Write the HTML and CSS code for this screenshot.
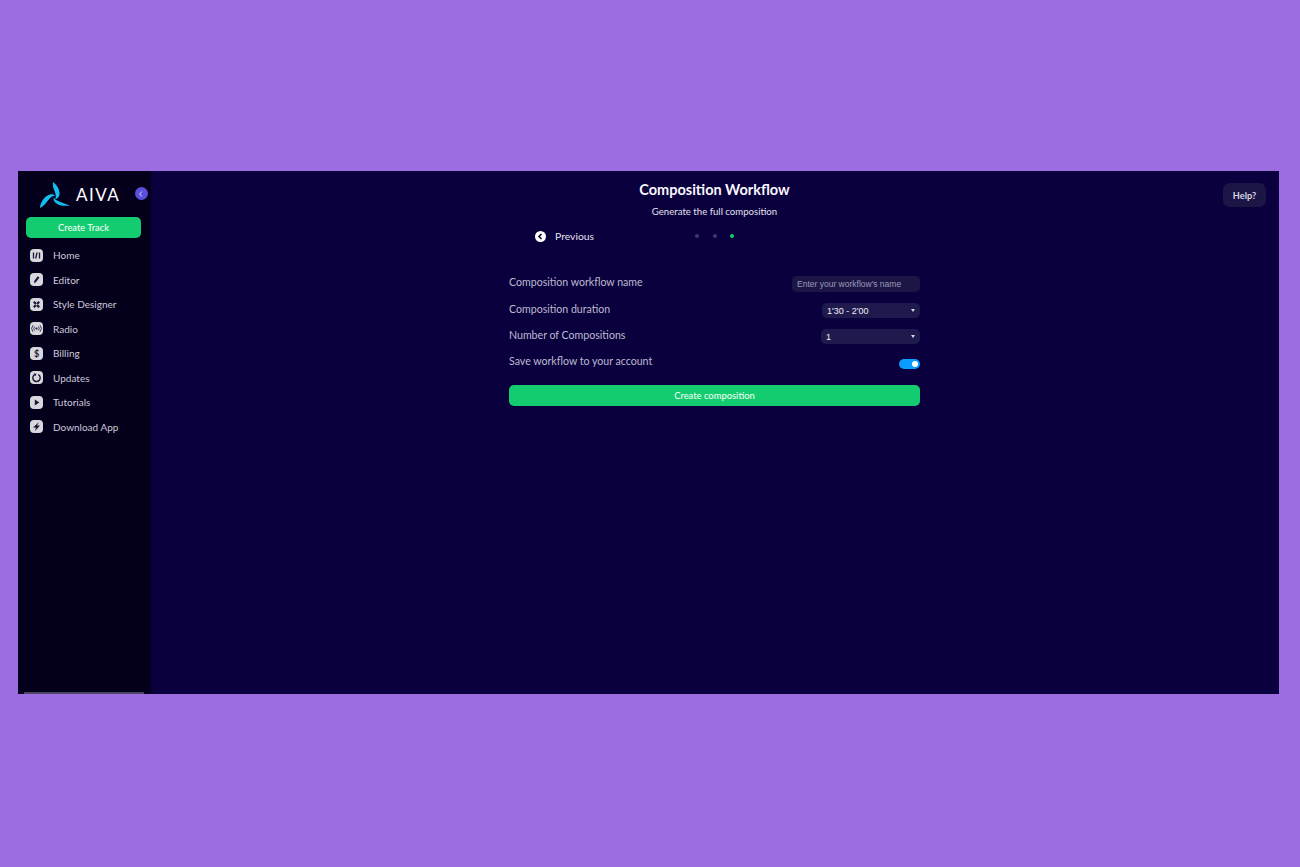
FILE: index.html
```html
<!DOCTYPE html>
<html lang="en">
<head>
<meta charset="utf-8">
<title>AIVA - Composition Workflow</title>
<link rel="stylesheet" href="styles.css">
</head>
<body>
<div class="app">
  <aside class="sidebar">
    <div class="brand">
      <svg class="logo" viewBox="0 0 30 26" width="30" height="26" aria-hidden="true">
        <path fill="#14bdf0" d="M13 0c4.500 3.500 7 8 6.500 12.500-.3 2.500-1.800 4-4 4.700 1-3.700-.4-6.700-1.500-9.700C13 5 12.700 2.500 13 0z"/>
        <path fill="#14bdf0" d="M0 26c.5-6 3.500-10.500 8.500-13 2.200-1.200 5-.8 6.500.5-3.500.5-5.500 3-7.500 5.500C5.500 22 3 24.500 0 26z"/>
        <path fill="#14bdf0" d="M30 23.500c-5 .8-11 .2-14.500-2.800-1.800-1.500-2.200-3.500-1.700-5.200 2 3 5 4 8.500 5.200 2.500 1 5.200 1.900 7.700 2.800z"/>
      </svg>
      <span class="wordmark">AIVA</span>
      <button class="collapse" type="button" aria-label="Collapse">
        <svg viewBox="0 0 8 8" width="8" height="8"><path d="M5 1.500 2.500 4 5 6.500" fill="none" stroke="#d9d6ff" stroke-width="1"/></svg>
      </button>
    </div>
    <button class="create-track" type="button">Create Track</button>
    <nav class="nav">
      <a class="nav-item"><span class="nav-icon"><svg viewBox="0 0 13 13"><path d="M3.500 3.500v6M5.700 9.500l1.400-6M9.500 3.500v6" stroke="#1a1530" stroke-width="1.300" fill="none"/></svg></span>Home</a>
      <a class="nav-item"><span class="nav-icon"><svg viewBox="0 0 13 13"><path d="M4 10.200l.4-2.400 3.300-4.600 1.700 1.200-3.300 4.600z" fill="#1a1530"/></svg></span>Editor</a>
      <a class="nav-item"><span class="nav-icon"><svg viewBox="0 0 13 13"><path d="M3.800 3.800l5.400 5.400M9.200 3.800l-5.400 5.400" stroke="#1a1530" stroke-width="2.200" fill="none"/><circle cx="6.500" cy="6.500" r="1" fill="#d8d6de"/></svg></span>Style Designer</a>
      <a class="nav-item"><span class="nav-icon"><svg viewBox="0 0 13 13"><circle cx="6.500" cy="6.500" r="1.100" fill="#1a1530"/><path d="M4.600 4.500a3 3 0 0 0 0 4M8.400 4.500a3 3 0 0 1 0 4M3 3.200a5 5 0 0 0 0 6.600M10 3.200a5 5 0 0 1 0 6.600" stroke="#1a1530" stroke-width=".8" fill="none"/></svg></span>Radio</a>
      <a class="nav-item"><span class="nav-icon nav-glyph">$</span>Billing</a>
      <a class="nav-item"><span class="nav-icon"><svg viewBox="0 0 13 13"><path d="M4.700 3.600a3.700 3.700 0 1 0 3.600 0" stroke="#1a1530" stroke-width="1.400" fill="none"/><path d="M3.500 2.500l3 .2-1 2.500z" fill="#1a1530"/></svg></span>Updates</a>
      <a class="nav-item"><span class="nav-icon"><svg viewBox="0 0 13 13"><path d="M4.800 3.500v6l4.500-3z" fill="#1a1530"/></svg></span>Tutorials</a>
      <a class="nav-item"><span class="nav-icon"><svg viewBox="0 0 13 13"><path d="M9 2 3 7.500h3L5 11l5-5.500H7z" fill="#1a1530"/></svg></span>Download App</a>
    </nav>
    <div class="side-scroll"></div>
  </aside>
  <main class="main">
    <button class="help" type="button">Help?</button>
    <h1 class="title">Composition Workflow</h1>
    <p class="subtitle">Generate the full composition</p>
    <div class="stepper">
      <a class="previous">
        <svg viewBox="0 0 11 11" width="11" height="11" aria-hidden="true"><circle cx="5.500" cy="5.500" r="5.500" fill="#fff"/><path d="M6.500 3 4 5.500 6.500 8" fill="none" stroke="#07003a" stroke-width="1.600"/></svg>
        Previous
      </a>
      <div class="dots"><i class="dot"></i><i class="dot"></i><i class="dot active"></i></div>
    </div>
    <form class="form">
      <div class="row">
        <label class="label">Composition workflow name</label>
        <input class="field name-input" type="text" placeholder="Enter your workflow's name">
      </div>
      <div class="row">
        <label class="label">Composition duration</label>
        <div class="field select"><span>1'30 - 2'00</span><i class="caret"></i></div>
      </div>
      <div class="row">
        <label class="label">Number of Compositions</label>
        <div class="field select wide"><span>1</span><i class="caret"></i></div>
      </div>
      <div class="row">
        <label class="label">Save workflow to your account</label>
        <span class="toggle"><i class="knob"></i></span>
      </div>
      <button class="create-composition" type="button">Create composition</button>
    </form>
  </main>
</div>
</body>
</html>
```

FILE: styles.css
```css
* { box-sizing: border-box; }
html, body { height: 100%; }
body {
  margin: 0;
  padding: 171px 21px 173px 18px;
  background: #9b6de0;
  font-family: Lato, "Open Sans", sans-serif;
  color: #fff;
  overflow: hidden;
}
.app {
  display: flex;
  height: 523px;
  background: #0a003e;
  overflow: hidden;
}
.sidebar {
  position: relative;
  flex: 0 0 133px;
  background: #04001c;
  padding: 0 8px;
}
.brand {
  display: flex;
  align-items: center;
  height: 46px;
  padding-left: 14px;
  position: relative;
}
.logo { flex: none; margin-top: 2px; }
.wordmark {
  margin-left: 6px;
  font-size: 17px;
  letter-spacing: 1.500px;
  font-weight: 400;
}
.collapse {
  position: absolute;
  left: 108.500px;
  top: 16px;
  width: 13px;
  height: 13px;
  padding: 0;
  border: 0;
  border-radius: 50%;
  background: #5a4fdc;
  display: flex;
  align-items: center;
  justify-content: center;
}
.create-track {
  display: block;
  width: 115px;
  height: 21px;
  padding-top: 1px;
  border: 0;
  border-radius: 5px;
  background: #14cc70;
  color: #f2fff8;
  font: 500 9.300px Lato, sans-serif;
}
.nav { display: flex; flex-direction: column; margin-top: 5px; }
.nav-item {
  display: flex;
  align-items: center;
  height: 24.500px;
  padding-left: 4px;
  gap: 10px;
  font-size: 10px;
  color: #cdcad8;
}
.nav-icon {
  flex: none;
  width: 13px;
  height: 13px;
  border-radius: 4px;
  background: #d8d6de;
  display: flex;
  align-items: center;
  justify-content: center;
}
.nav-icon svg { width: 13px; height: 13px; display: block; }
.nav-glyph { color: #1a1530; font-size: 9px; font-weight: 700; }
.side-scroll {
  position: absolute;
  left: 6px;
  right: 7px;
  bottom: 0;
  height: 2px;
  background: #4a4560;
}
.main {
  position: relative;
  flex: 1;
  display: flex;
  flex-direction: column;
  align-items: center;
}
.help {
  position: absolute;
  top: 12px;
  right: 13px;
  width: 43px;
  height: 24px;
  border: 0;
  border-radius: 7px;
  background: #1c1647;
  color: #d8d6e6;
  font: 700 9.200px Lato, sans-serif;
}
.title {
  margin: 10px 1px 0 0;
  font-size: 14.500px;
  line-height: 18px;
  font-weight: 700;
  color: #f8f7fc;
}
.subtitle {
  margin: 6px 1px 0 0;
  font-size: 9.600px;
  line-height: 14px;
  color: #e2e0ee;
}
.stepper {
  position: relative;
  width: 411px;
  height: 16px;
  margin: 10px 1px 0 0;
  display: flex;
  justify-content: center;
  align-items: center;
}
.previous {
  position: absolute;
  left: 26px;
  top: 1px;
  display: flex;
  align-items: center;
  gap: 9px;
  font-size: 10.400px;
  line-height: 12px;
  color: #e2e0ee;
}
.dots { display: flex; gap: 13.500px; margin-top: -2px; }
.dot { width: 4px; height: 4px; border-radius: 50%; background: #3f3a66; }
.dot.active { background: #14cc70; }
.form { width: 411px; margin: 25px 1px 0 0; display: flex; flex-direction: column; }
.row {
  display: flex;
  align-items: center;
  justify-content: space-between;
  height: 26.400px;
}
.label { font-size: 10.600px; color: #bdbad0; margin-top: -2px; }
.field {
  height: 15px;
  margin-top: 2px;
  border: 0;
  border-radius: 5px;
  background: #1f1a4d;
  font: 8.500px "Liberation Sans", Arial, sans-serif;
  color: #f0eef8;
}
.name-input { width: 128px; height: 16px; padding: 0 5px; outline: 0; background: #1c1647; }
.name-input::placeholder { color: #9d99b8; opacity: 1; }
.select {
  width: 98px;
  display: flex;
  align-items: center;
  justify-content: space-between;
  padding: 0 5px;
  font-size: 9px;
}
.select.wide { width: 99px; }
.caret {
  width: 0;
  height: 0;
  border-left: 2.500px solid transparent;
  border-right: 2.500px solid transparent;
  border-top: 3px solid #d8d6e6;
}
.toggle {
  width: 21px;
  height: 10px;
  margin-top: 3px;
  border-radius: 5px;
  background: #0a9cff;
  position: relative;
}
.knob {
  position: absolute;
  right: 2px;
  top: 2px;
  width: 6px;
  height: 6px;
  border-radius: 50%;
  background: #fff;
}
.create-composition {
  margin-top: 9px;
  height: 21px;
  border: 0;
  border-radius: 5px;
  background: #14cc70;
  color: #eafff3;
  font: 500 9.400px Lato, sans-serif;
}
```
